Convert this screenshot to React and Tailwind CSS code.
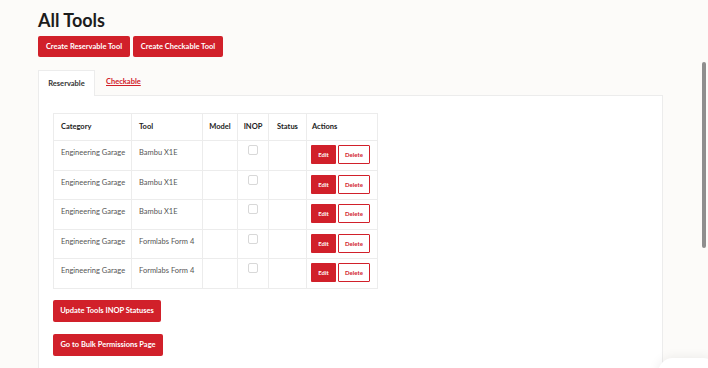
const rows = [
  { category: 'Engineering Garage', tool: 'Bambu X1E' },
  { category: 'Engineering Garage', tool: 'Bambu X1E' },
  { category: 'Engineering Garage', tool: 'Bambu X1E' },
  { category: 'Engineering Garage', tool: 'Formlabs Form 4' },
  { category: 'Engineering Garage', tool: 'Formlabs Form 4' },
];

const App = () => {
  return (
    <div
      className="relative h-[368px] w-[708px] overflow-hidden bg-[#fcfbf9] text-[#222]"
      style={{ fontFamily: 'Lato, "Open Sans", "Liberation Sans", sans-serif' }}
    >
      <div className="pl-[38px] pr-[45px] pt-[8px]">
        <h1 className="text-[18px] font-bold leading-[24px] text-[#1c1c1c]">All Tools</h1>

        <div className="mt-[4px] flex gap-[3px]">
          <button className="h-[21px] w-[92px] rounded-[2px] bg-[#d1202a] text-[7.5px] font-bold text-white">
            Create Reservable Tool
          </button>
          <button className="h-[21px] w-[90px] rounded-[2px] bg-[#d1202a] text-[7.5px] font-bold text-white">
            Create Checkable Tool
          </button>
        </div>

        {/* Tabs */}
        <div className="mt-[12px] flex items-end">
          <div className="-mb-px flex h-[26px] w-[57px] items-center justify-center border border-b-0 border-[#ececec] bg-white text-[7.5px] font-bold text-[#333]">
            Reservable
          </div>
          <div className="ml-[11px] flex h-[26px] items-center text-[7.5px] font-bold text-[#d1202a] underline">
            Checkable
          </div>
        </div>

        <div className="h-[300px] border border-[#ececec] bg-white px-[14px] pt-[17px]">
          <table className="border-collapse text-[7.5px]">
            <thead>
              <tr className="h-[27px]">
                <th className="w-[78px] border border-[#ececec] pl-[7px] text-left font-bold">Category</th>
                <th className="w-[71px] border border-[#ececec] pl-[7px] text-left font-bold">Tool</th>
                <th className="w-[35px] border border-[#ececec] text-center font-bold">Model</th>
                <th className="w-[31px] border border-[#ececec] text-center font-bold">INOP</th>
                <th className="w-[38px] border border-[#ececec] text-center font-bold">Status</th>
                <th className="w-[71px] border border-[#ececec] pl-[5px] text-left font-bold">Actions</th>
              </tr>
            </thead>
            <tbody>
              {rows.map((row, i) => (
                <tr key={i} className="h-[29.5px] align-top text-[#555]">
                  <td className="border border-[#ececec] pl-[7px] pt-[6px]">{row.category}</td>
                  <td className="border border-[#ececec] pl-[7px] pt-[6px]">{row.tool}</td>
                  <td className="border border-[#ececec]"></td>
                  <td className="border border-[#ececec] pt-[4px]">
                    <div className="mx-auto h-[10px] w-[10px] rounded-[2px] border border-[#d8d8d8] bg-white"></div>
                  </td>
                  <td className="border border-[#ececec]"></td>
                  <td className="border border-[#ececec] pl-[4px] pt-[4px]">
                    <div className="flex gap-[2px]">
                      <button className="h-[19px] w-[25px] rounded-[1px] bg-[#d1202a] text-[6px] font-bold text-white">Edit</button>
                      <button className="h-[19px] w-[32px] rounded-[1px] border border-[#d1202a] bg-white text-[6px] font-bold text-[#d1202a]">Delete</button>
                    </div>
                  </td>
                </tr>
              ))}
            </tbody>
          </table>

          <div className="mt-[11px] flex flex-col items-start gap-[12px]">
            <button className="h-[22px] w-[108px] rounded-[2px] bg-[#d1202a] text-[7.5px] font-bold text-white">
              Update Tools INOP Statuses
            </button>
            <button className="h-[22px] w-[110px] rounded-[2px] bg-[#d1202a] text-[7.5px] font-bold text-white">
              Go to Bulk Permissions Page
            </button>
          </div>
        </div>
      </div>

      {/* scrollbar thumb */}
      <div className="absolute right-[2px] top-[62px] h-[186px] w-[4px] rounded-full bg-[#8e8e8e]"></div>
      {/* floating shadow bottom-right */}
      <div className="absolute -bottom-[20px] right-[-10px] h-[30px] w-[60px] rounded-full bg-white shadow-[0_0_12px_rgba(0,0,0,0.08)]"></div>
    </div>
  );
};

export default App;
